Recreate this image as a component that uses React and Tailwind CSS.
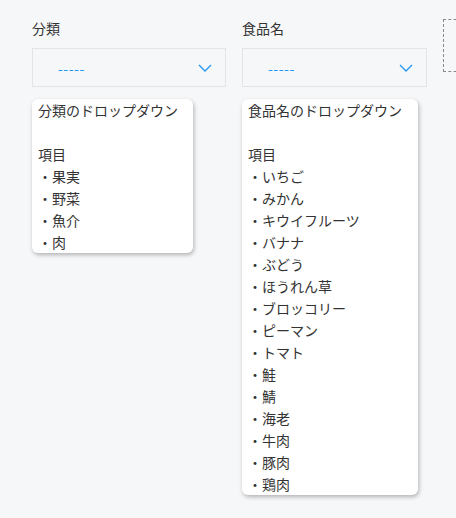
import React from 'react';

const categories = ['果実', '野菜', '魚介', '肉'];
const foods = [
  'いちご',
  'みかん',
  'キウイフルーツ',
  'バナナ',
  'ぶどう',
  'ほうれん草',
  'ブロッコリー',
  'ピーマン',
  'トマト',
  '鮭',
  '鯖',
  '海老',
  '牛肉',
  '豚肉',
  '鶏肉',
];

function Chevron() {
  return (
    <svg width="14" height="8" viewBox="0 0 14 8" fill="none">
      <polyline points="1,1 7,7 13,1" stroke="#2196f3" strokeWidth="1.3" />
    </svg>
  );
}

function SelectColumn({ label, width, panelWidth, items }) {
  return (
    <div className="flex flex-col shrink-0" style={{ width }}>
      <div className="h-5 text-sm leading-5 text-[#333]">{label}</div>
      <div className="mt-[10px] h-[39px] border border-[#e1e4e8] bg-[#f6f7f9] flex items-center justify-between pl-[25px] pr-[13px]">
        <span className="text-sm text-[#2196f3] tracking-[0.5px]">-----</span>
        <Chevron />
      </div>
      {/* dropdown preview */}
      <div
        className="mt-3 bg-white rounded-md shadow-[1px_2px_4px_rgba(0,0,0,0.28)] pl-1.5 text-sm leading-[22px] text-[#333]"
        style={{ width: panelWidth }}
      >
        <div>{label}のドロップダウン</div>
        <div className="h-[22px]" />
        <div>項目</div>
        {items.map((it) => (
          <div key={it}>・{it}</div>
        ))}
      </div>
    </div>
  );
}

export default function App() {
  return (
    <div
      className="min-h-screen bg-[#f6f7f9] pl-8 pt-[18px] flex items-start gap-4 overflow-hidden"
      style={{ fontFamily: '"Noto Sans CJK JP", "Noto Sans", sans-serif' }}
    >
      <SelectColumn label="分類" width={194} panelWidth={161} items={categories} />
      <SelectColumn label="食品名" width={185} panelWidth={176} items={foods} />
      <div className="mt-[1px] w-[40px] h-[53px] shrink-0 border border-dashed border-[#8a8a8a]" />
    </div>
  );
}
